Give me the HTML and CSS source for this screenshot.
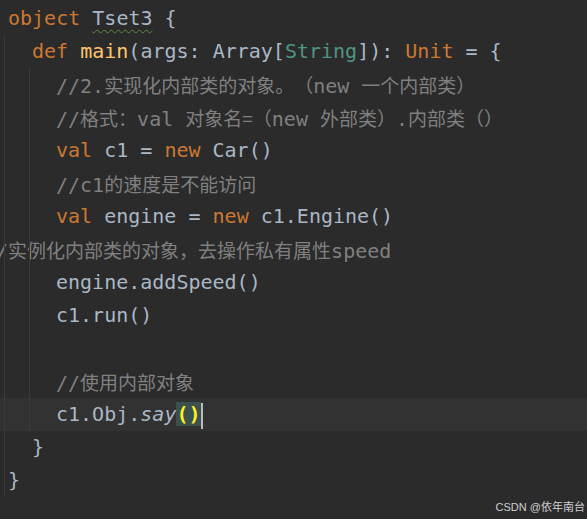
FILE: index.html
```html
<!DOCTYPE html>
<html lang="zh">
<head>
<meta charset="utf-8">
<title>Tset3</title>
<link rel="stylesheet" href="styles.css">
</head>
<body>
<div class="editor">
  <div class="line i0"><span class="kw">object</span> <span class="err">Tset3</span> {</div>
  <div class="block g1">
    <div class="line i1"><span class="kw">def</span> <span class="fn">main</span>(args: Array[<span class="ty">String</span>]): <span class="kw">Unit</span> = {</div>
    <div class="block g2">
      <div class="line i2 cm">//2.<span class="cj">实现化内部类的对象。（</span>new <span class="cj">一个内部类）</span></div>
      <div class="line i2 cm">//<span class="cj">格式：</span>val <span class="cj">对象名=（</span>new <span class="cj">外部类）</span>.<span class="cj">内部类（）</span></div>
      <div class="line i2"><span class="kw">val</span> c1 = <span class="kw">new</span> Car()</div>
      <div class="line i2 cm">//c1<span class="cj">的速度是不能访问</span></div>
      <div class="line i2"><span class="kw">val</span> engine = <span class="kw">new</span> c1.Engine()</div>
      <div class="line cm"><span class="shift">//<span class="cj">实例化内部类的对象，去操作私有属性</span>speed</span></div>
      <div class="line i2">engine.addSpeed()</div>
      <div class="line i2">c1.run()</div>
      <div class="line i2"></div>
      <div class="line i2 cm">//<span class="cj">使用内部对象</span></div>
      <div class="line i2 current">c1.Obj.<span class="it">say</span><span class="match">()</span><span class="caret"></span></div>
    </div>
    <div class="line i1">}</div>
    <div class="line i0">}</div>
  </div>
</div>
<div class="watermark">CSDN @依年南台</div>
</body>
</html>
```

FILE: styles.css
```css
html, body {
  margin: 0;
  padding: 0;
  background: #2b2b2b;
  height: 100%;
  overflow: hidden;
}

.editor {
  padding-top: 2px;
  font-family: "DejaVu Sans Mono", "Noto Sans CJK SC", monospace;
  font-size: 20px;
  color: #a9b7c6;
  text-spacing-trim: space-all;
}

.block {
  position: relative;
}

.block::before {
  content: "";
  position: absolute;
  top: 0;
  bottom: 0;
  width: 1px;
  background: #3a3a3a;
  z-index: 1;
}

.g1::before { left: 4px; }
.g2::before { left: 29px; }

.line {
  height: 33px;
  line-height: 33px;
  white-space: pre;
}

.i0 { padding-left: 8px; }
.i1 { padding-left: 32px; }
.i2 { padding-left: 56px; }

.kw { color: #cc7832; }
.fn { color: #ffc66d; }
.ty { color: #4f9586; }
.cm { color: #808080; }
.it { font-style: italic; }

.err {
  text-decoration: underline wavy #5b8c3a;
  text-decoration-thickness: 1px;
  text-underline-offset: 4px;
}

.cj {
  font-family: "Noto Sans CJK SC", sans-serif;
  font-size: 19px;
  text-spacing-trim: space-all;
}

.shift {
  margin-left: -16px;
}

.current {
  background: #323232;
}

.match {
  background: #3b514d;
  color: #ffef28;
  font-weight: bold;
}

.caret {
  display: inline-block;
  width: 2px;
  height: 26px;
  vertical-align: middle;
  background: #bbbbbb;
}

.watermark {
  position: absolute;
  right: 2px;
  bottom: 5px;
  font-family: "Liberation Sans", "Noto Sans CJK SC", sans-serif;
  font-size: 11px;
  color: #cfcfcf;
}
```
